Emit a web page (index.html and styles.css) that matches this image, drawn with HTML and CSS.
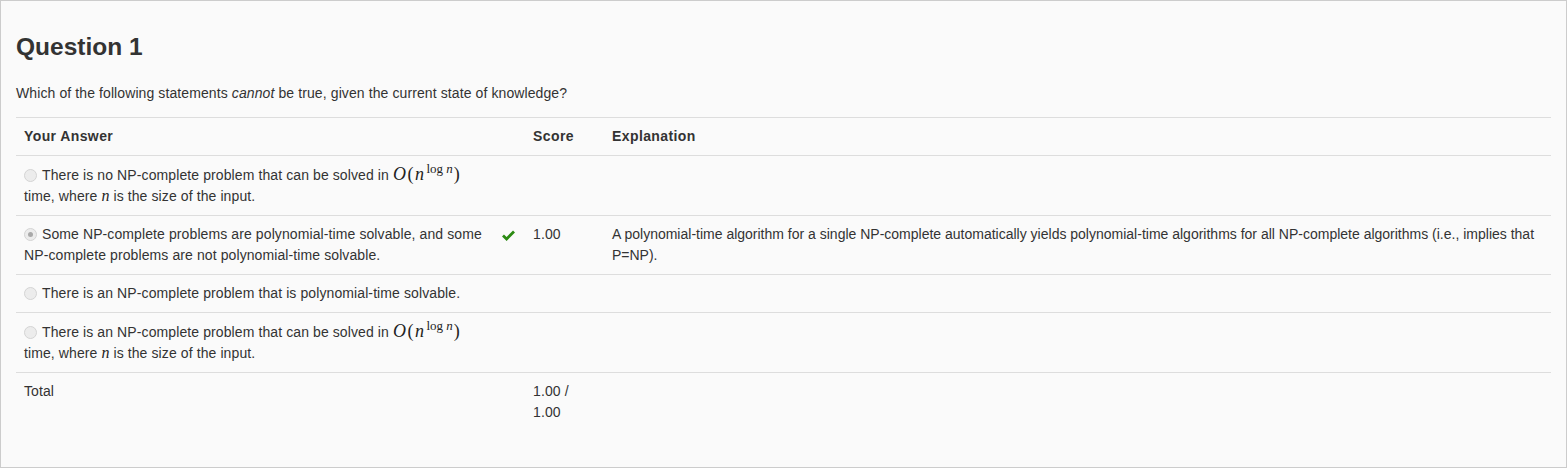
FILE: index.html
```html
<!DOCTYPE html>
<html lang="en">
<head>
<meta charset="utf-8">
<title>Question 1</title>
<link rel="stylesheet" href="styles.css">
</head>
<body>
<div class="panel">
  <h2 class="title">Question 1</h2>
  <p class="prompt">Which of the following statements <em>cannot</em> be true, given the current state of knowledge?</p>
  <table class="results">
    <colgroup>
      <col class="c-answer">
      <col class="c-check">
      <col class="c-score">
      <col class="c-expl">
    </colgroup>
    <thead>
      <tr>
        <th>Your Answer</th>
        <th></th>
        <th>Score</th>
        <th>Explanation</th>
      </tr>
    </thead>
    <tbody>
      <tr>
        <td><span class="radio"></span>There is no NP-complete problem that can be solved in <span class="math"><span class="mi">O</span><span class="mo">(</span><span class="mi">n</span><sup class="sup">log <span class="mi">n</span></sup><span class="mo">)</span></span><br>time, where <span class="math small"><span class="mi">n</span></span> is the size of the input.</td>
        <td></td>
        <td></td>
        <td></td>
      </tr>
      <tr>
        <td><span class="radio checked"></span>Some NP-complete problems are polynomial-time solvable, and some NP-complete problems are not polynomial-time solvable.</td>
        <td><svg class="check" width="13" height="11" viewBox="0 0 13 11"><path d="M1 5.6 L4.6 9 L12 1.6" fill="none" stroke="#2b8a12" stroke-width="2.8" stroke-linejoin="miter"/></svg></td>
        <td>1.00</td>
        <td class="expl">A polynomial-time algorithm for a single NP-complete automatically yields polynomial-time algorithms for all NP-complete algorithms (i.e., implies that P=NP).</td>
      </tr>
      <tr>
        <td><span class="radio"></span>There is an NP-complete problem that is polynomial-time solvable.</td>
        <td></td>
        <td></td>
        <td></td>
      </tr>
      <tr>
        <td><span class="radio"></span>There is an NP-complete problem that can be solved in <span class="math"><span class="mi">O</span><span class="mo">(</span><span class="mi">n</span><sup class="sup">log <span class="mi">n</span></sup><span class="mo">)</span></span><br>time, where <span class="math small"><span class="mi">n</span></span> is the size of the input.</td>
        <td></td>
        <td></td>
        <td></td>
      </tr>
      <tr class="total">
        <td>Total</td>
        <td></td>
        <td>1.00 / 1.00</td>
        <td></td>
      </tr>
    </tbody>
  </table>
</div>
</body>
</html>
```

FILE: styles.css
```css
html, body {
  margin: 0;
  padding: 0;
  background: #fafafa;
}

body {
  font-family: "Liberation Sans", Arial, sans-serif;
  font-size: 14px;
  line-height: 21px;
  letter-spacing: 0.1px;
  color: #333;
}

.panel {
  box-sizing: border-box;
  min-height: 100vh;
  border: 1px solid #ccc;
  padding: 0 15px 30px;
  background: #fafafa;
}

.title {
  margin: 33px 0 23px;
  font-size: 24.5px;
  line-height: 26.4px;
  font-weight: bold;
  letter-spacing: 0;
  color: #333;
}

.prompt {
  margin: 0 0 13px;
}

.results {
  width: 100%;
  border-collapse: collapse;
  table-layout: fixed;
}

.c-answer { width: 478px; }
.c-check { width: 31px; }
.c-score { width: 79px; }

.results th,
.results td {
  padding: 8px;
  text-align: left;
  vertical-align: top;
  border-top: 1px solid #ddd;
}

.results th {
  font-weight: bold;
  letter-spacing: 0.4px;
}

.results td:nth-child(3) {
  padding-right: 24px;
}

.results td.expl {
  letter-spacing: 0;
}

.radio {
  display: inline-block;
  box-sizing: border-box;
  width: 13px;
  height: 13px;
  margin: 0 5px 0 0;
  vertical-align: -2px;
  border-radius: 50%;
  border: 1px solid #d4d4d4;
  background: #ececec;
  position: relative;
}

.radio.checked::after {
  content: "";
  position: absolute;
  left: 3px;
  top: 3px;
  width: 5px;
  height: 5px;
  border-radius: 50%;
  background: #a9a9a9;
}

.check {
  display: block;
  margin-top: 6px;
}

.math {
  font-family: "Liberation Serif", "DejaVu Serif", serif;
  font-size: 18px;
  line-height: 20px;
  letter-spacing: 0.5px;
  color: #222;
  white-space: nowrap;
}

.math.small {
  font-size: 16px;
  line-height: 1;
  letter-spacing: 0;
}

.mi {
  font-style: italic;
}

.mo {
  font-style: normal;
  padding: 0 1px;
}

.sup {
  font-size: 13px;
  vertical-align: 7px;
  line-height: 0;
  padding-left: 2px;
  letter-spacing: 0;
}
```
